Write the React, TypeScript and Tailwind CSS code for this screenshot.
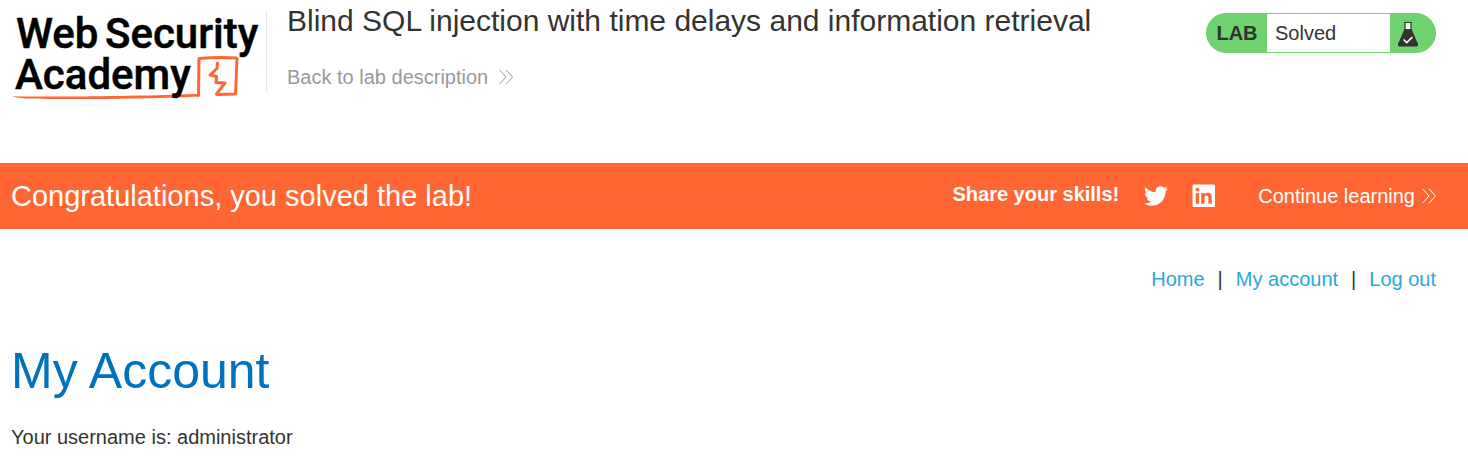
function Chevrons() {
  return (
    <svg viewBox="0 0 14 16" className="h-4 w-3.5 shrink-0" fill="none" stroke="currentColor" strokeWidth="1" aria-hidden="true">
      <path d="M0.5 0.8 7 8 0.5 15.2M7 0.8 13.5 8 7 15.2" />
    </svg>
  );
}

function Logo() {
  return (
    <a href="#academy" className="block shrink-0" aria-label="Web Security Academy">
      <svg viewBox="0 0 256 90" className="h-[90px] w-64 overflow-visible" aria-hidden="true">
        <path d="M1 84.200C40 85 110 84.500 187 82L187.500 84.500C120 87.500 50 87.500 14 86.500Q6 86 1 84.200z" fill="#ff6633" />
        <path d="M187.500 83.500 188 46.500Q206 45 225.500 46L226 47 224.500 82 206 82.500" fill="none" stroke="#ff6633" strokeWidth="3" strokeLinejoin="round" strokeLinecap="round" />
        <path d="M206.500 51 206 56.500 199 63 205.500 64.500 205 70.500 214 71 205.500 82" fill="none" stroke="#ff6633" strokeWidth="3" strokeLinejoin="round" strokeLinecap="round" />
        <g fill="#000" stroke="#000" strokeWidth="0.5" className="font-[Roboto,sans-serif] text-[42px] font-medium">
          <text x="5" y="36">Web</text>
          <text x="94" y="36">Security</text>
          <text x="4" y="77">Academy</text>
        </g>
      </svg>
    </a>
  );
}

function Flask() {
  return (
    <svg viewBox="0 0 20 26" className="h-[26px] w-5" aria-hidden="true">
      <path d="M7 2h6v6H7z" fill="#fff" />
      <path d="M6 1.500h8M7 1v8M13 1v8" fill="none" stroke="#333332" strokeWidth="1.200" />
      <path d="M6.500 8h7L20 23q.4 2.500-2 2.500H2Q-.4 25.500 0 23z" fill="#333332" />
      <path d="m5.500 18.500 3.200 3L14.500 16" fill="none" stroke="#fff" strokeWidth="1.700" />
    </svg>
  );
}

export default function App() {
  return (
    <div className="bg-white pb-3 font-['Liberation_Sans',Arial,sans-serif] text-xl leading-6 text-[#333332]">
      <header className="flex items-start pt-3 pr-8 pb-[61px] pl-[11px]">
        <Logo />
        <div className="-ml-px flex min-w-0 flex-1 items-start justify-between">
          <div className="flex items-start">
            <div className="h-[79px] w-px bg-[#e2e2e2]" />
            <div className="-mt-2 ml-5">
              <h2 className="text-[30px] leading-[34px]">Blind SQL injection with time delays and information retrieval</h2>
              <a href="#description" className="mt-[27px] flex items-center gap-[11px] text-[#999999]">
                Back to lab description
                <Chevrons />
              </a>
            </div>
          </div>
          <div className="mt-px flex h-10 w-[230px] shrink-0 overflow-hidden rounded-[20px] border border-[#70d16f] bg-[#70d16f]">
            <span className="flex w-[60px] items-center justify-center font-bold">LAB</span>
            <p className="flex flex-1 items-center bg-white pl-2">Solved</p>
            <span className="flex w-[45px] items-center pt-0.5 pl-2">
              <Flask />
            </span>
          </div>
        </div>
      </header>

      <section className="flex h-[66px] items-center justify-between bg-[#ff6633] pr-8 pl-[11px] text-white">
        <h4 className="text-[29px] leading-8">Congratulations, you solved the lab!</h4>
        <div className="flex items-center">
          <span className="pb-1 font-bold">Share your skills!</span>
          <a href="#twitter" aria-label="Share on Twitter" className="ml-[25px]">
            <svg viewBox="0 0 24 24" className="size-6" fill="currentColor" aria-hidden="true">
              <path d="M23.950 4.570a10 10 0 0 1-2.820.770 4.960 4.960 0 0 0 2.160-2.720c-.950.550-2 .950-3.130 1.180a4.920 4.920 0 0 0-8.380 4.480C7.690 8.090 4.070 6.130 1.640 3.160a4.820 4.820 0 0 0-.670 2.480c0 1.710.870 3.210 2.190 4.100a4.900 4.900 0 0 1-2.230-.620v.060a4.920 4.920 0 0 0 3.950 4.830 5 5 0 0 1-2.210.080 4.940 4.940 0 0 0 4.600 3.420A9.870 9.870 0 0 1 0 19.540a13.990 13.990 0 0 0 7.550 2.210c9.050 0 14-7.500 14-13.980 0-.210 0-.420-.020-.630a9.940 9.940 0 0 0 2.460-2.550z" />
            </svg>
          </a>
          <a href="#linkedin" aria-label="Share on LinkedIn" className="ml-6">
            <svg viewBox="0 0 24 24" className="size-6" aria-hidden="true">
              <rect x="0.5" y="0.5" width="22.500" height="22.500" rx="1.500" fill="currentColor" />
              <path d="M3.800 9h3.300v10.700H3.800zM9.200 9h3.200v1.500c.7-1.100 1.700-1.800 3.300-1.800 3.200 0 4 2 4 4.900v6.100h-3.300v-5.400c0-1.500-.2-2.700-1.900-2.700s-2 1.200-2 2.700v5.400H9.200z" fill="#ff6633" />
              <circle cx="5.450" cy="5.600" r="1.900" fill="#ff6633" />
            </svg>
          </a>
          <a href="#learning" className="ml-[42px] flex items-center gap-[7px]">
            Continue learning
            <Chevrons />
          </a>
        </div>
      </section>

      <nav className="flex justify-end gap-[13px] pt-[38px] pr-8">
        <a href="#home" className="text-[#29a7df]">Home</a>
        <span>|</span>
        <a href="#account" className="text-[#29a7df]">My account</a>
        <span>|</span>
        <a href="#logout" className="text-[#29a7df]">Log out</a>
      </nav>

      <main className="px-[11px]">
        <h1 className="mt-[51px] text-[50px] leading-[58px] text-[#0071bc]">My Account</h1>
        <p className="mt-[25px]">Your username is: administrator</p>
      </main>
    </div>
  );
}
